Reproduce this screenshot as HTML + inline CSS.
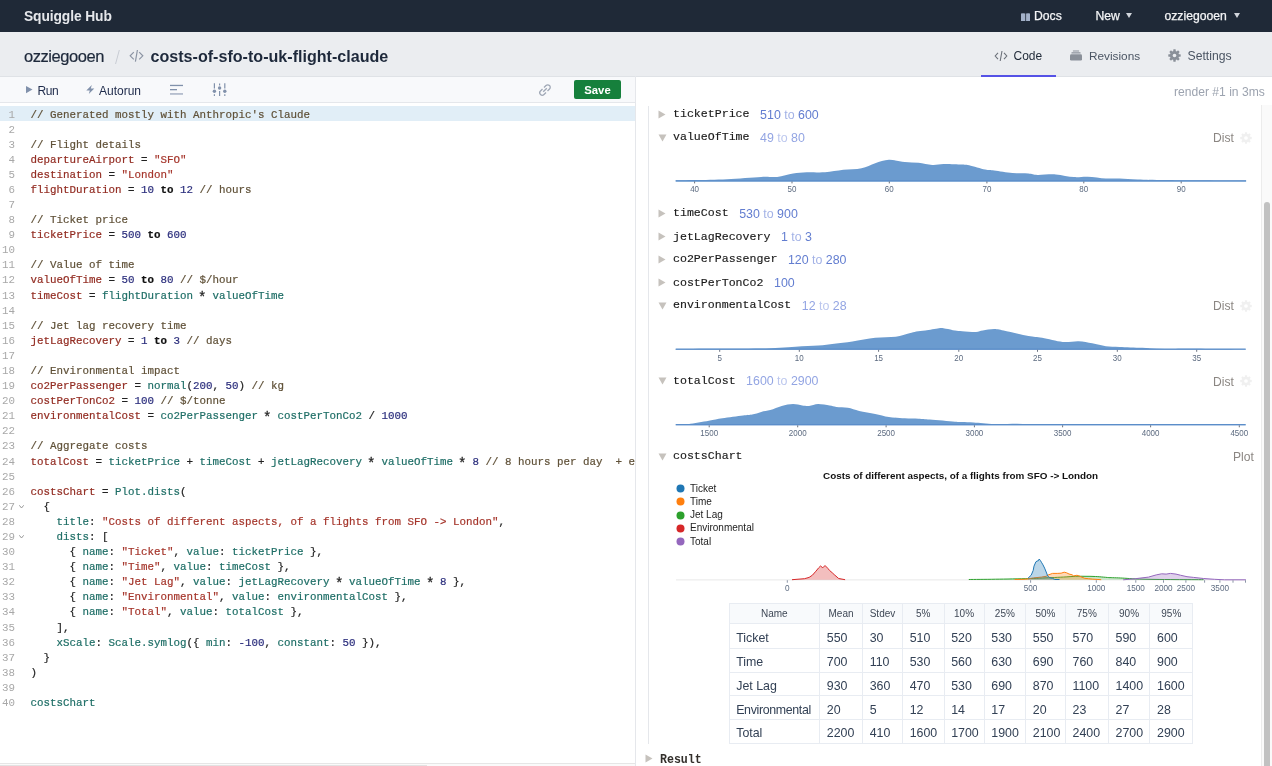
<!DOCTYPE html><html><head><meta charset="utf-8"><style>
*{box-sizing:border-box;margin:0;padding:0}
html,body{width:1272px;height:766px;overflow:hidden;background:#fff;font-family:"Liberation Sans",sans-serif}
.a{position:absolute;white-space:nowrap}
#code{position:absolute;left:0;top:0;font-family:"Liberation Mono",monospace;font-size:10.83px;line-height:15.09px}
.ln{position:absolute;left:0;width:15px;text-align:right;color:#a8a8a8}
.cl{position:absolute;left:30.5px;white-space:pre;color:#222;-webkit-text-stroke:0.2px}
.c{color:#5f5037}
.v{color:#922b21}
.n{color:#2a2d7c}
.k{font-weight:bold;color:#111}
.ast{display:inline-block;transform:translateY(2.6px) scale(1.3)}
.s{color:#a5352b}
.i{color:#1e6e66}
.vn{font-family:"Liberation Mono",monospace;font-size:11.6px;color:#1a1a1a;-webkit-text-stroke:0.15px}
.val{font-size:12.4px;color:#627dd0}
.val i{font-style:normal;color:#a3b2e6}
.vl{font-size:12.4px;color:#93a5e3}
.vl i{font-style:normal;color:#bcc7ee}
.dist{font-size:12.1px;color:#8b8682}
.tk{font-size:7.6px;color:#5d6b80;text-anchor:middle}
table{border-collapse:collapse;position:absolute;left:729px;top:603px;font-size:12.4px;color:#334155}
td,th{border:1px solid #e6eaf0;padding:0 0 0 8px;text-align:left;font-weight:normal;white-space:nowrap}
th{background:#f8fafc;font-size:10px;color:#374151;text-align:center;padding:0}
</style></head><body><div style="position:absolute;left:0;top:0;width:1272px;height:766px;overflow:hidden;will-change:transform">
<div class="a" style="left:0;top:0;width:1272px;height:32px;background:#1f2937"></div>
<div class="a" style="left:24px;top:8.5px;font-size:13.8px;letter-spacing:-0.1px;font-weight:bold;color:#e5e7eb">Squiggle Hub</div>
<svg class="a" style="left:1020.8px;top:12.7px" width="9.4" height="8.2" viewBox="0 0 9.4 8.2"><path d="M0 0.6 Q2.2 0 4.3 0.6 V8.2 Q2.2 7.6 0 8.2Z M5.1 0.6 Q7.2 0 9.4 0.6 V8.2 Q7.2 7.6 5.1 8.2Z" fill="#a3b1c9"/></svg>
<div class="a" style="left:1034px;top:8.8px;font-size:12.2px;color:#f3f4f6;-webkit-text-stroke:0.25px">Docs</div>
<div class="a" style="left:1095.5px;top:8.8px;font-size:12.2px;color:#f3f4f6;-webkit-text-stroke:0.25px">New</div>
<svg class="a" style="left:1126px;top:13px" width="6" height="5"><path d="M0 0H6L3 5Z" fill="#d1d5db"/></svg>
<div class="a" style="left:1164.5px;top:8.8px;font-size:12.2px;color:#f3f4f6;-webkit-text-stroke:0.25px">ozziegooen</div>
<svg class="a" style="left:1234px;top:13px" width="6" height="5"><path d="M0 0H6L3 5Z" fill="#d1d5db"/></svg>
<div class="a" style="left:0;top:32px;width:1272px;height:44px;background:#ebedf0"></div>
<div class="a" style="left:0;top:76px;width:1272px;height:1px;background:#dfe2e6"></div>
<div class="a" style="left:24px;top:47px;font-size:16.5px;letter-spacing:-0.45px;color:#1e293b;-webkit-text-stroke:0.2px">ozziegooen</div>
<div class="a" style="left:116.5px;top:50px;width:1.2px;height:13.5px;background:#c8ccd3;transform:skewX(-15deg)"></div>
<svg class="a" style="left:129px;top:49px" width="15" height="13" viewBox="0 0 15 13"><path d="M4.8 3.2 L1.2 6.8 L4.8 10.4 M10.2 3.2 L13.8 6.8 L10.2 10.4 M8.4 1 L6.4 12.6" fill="none" stroke="#8b94a3" stroke-width="1.2"/></svg>
<div class="a" style="left:150.5px;top:47px;font-size:16.1px;font-weight:bold;color:#1e293b">costs-of-sfo-to-uk-flight-claude</div>
<svg class="a" style="left:994px;top:49.5px" width="14" height="12" viewBox="0 0 14 12"><path d="M4 2.8 L1.2 6 L4 9.2 M10 2.8 L12.8 6 L10 9.2 M8 1 L6.2 11" fill="none" stroke="#6b7079" stroke-width="1.1"/></svg>
<div class="a" style="left:1013.5px;top:48.8px;font-size:12px;color:#1f2937">Code</div>
<div class="a" style="left:981px;top:74.5px;width:75px;height:2px;background:#5552e6"></div>
<svg class="a" style="left:1070px;top:49.5px" width="12" height="11" viewBox="0 0 12 11"><rect x="2.8" y="0.4" width="6.4" height="1" rx=".4" fill="#8a9099"/><rect x="1.4" y="2.2" width="9.2" height="1.3" rx=".5" fill="#8a9099"/><rect x="0" y="4.3" width="12" height="6.3" rx="1.3" fill="#8a9099"/></svg>
<div class="a" style="left:1089px;top:48.8px;font-size:11.8px;color:#4b5563">Revisions</div>
<svg class="a" style="left:1167.5px;top:49px" width="13" height="13" viewBox="0 0 13 13"><circle cx="6.5" cy="6.5" r="4.59" fill="#8a9099"/><rect x="5.26" y="0.30" width="2.48" height="3.10" rx="0.4" fill="#8a9099" transform="rotate(0.0 6.5 6.5)"/><rect x="5.26" y="0.30" width="2.48" height="3.10" rx="0.4" fill="#8a9099" transform="rotate(45.0 6.5 6.5)"/><rect x="5.26" y="0.30" width="2.48" height="3.10" rx="0.4" fill="#8a9099" transform="rotate(90.0 6.5 6.5)"/><rect x="5.26" y="0.30" width="2.48" height="3.10" rx="0.4" fill="#8a9099" transform="rotate(135.0 6.5 6.5)"/><rect x="5.26" y="0.30" width="2.48" height="3.10" rx="0.4" fill="#8a9099" transform="rotate(180.0 6.5 6.5)"/><rect x="5.26" y="0.30" width="2.48" height="3.10" rx="0.4" fill="#8a9099" transform="rotate(225.0 6.5 6.5)"/><rect x="5.26" y="0.30" width="2.48" height="3.10" rx="0.4" fill="#8a9099" transform="rotate(270.0 6.5 6.5)"/><rect x="5.26" y="0.30" width="2.48" height="3.10" rx="0.4" fill="#8a9099" transform="rotate(315.0 6.5 6.5)"/><circle cx="6.5" cy="6.5" r="1.8" fill="#ebedf0"/></svg>
<div class="a" style="left:1187.5px;top:48.6px;font-size:12.2px;color:#4b5563">Settings</div>
<div class="a" style="left:0;top:77px;width:636px;height:26px;background:#f8f9fb;border-bottom:1px solid #e5e7eb"></div>
<div class="a" style="left:635px;top:76px;width:1px;height:690px;background:#e5e7eb"></div>
<svg class="a" style="left:26px;top:86px" width="7" height="8"><path d="M0 0L6.5 3.6L0 7.2Z" fill="#8191ab"/></svg>
<div class="a" style="left:37.5px;top:84px;font-size:12px;letter-spacing:-0.4px;color:#1e2a4a">Run</div>
<svg class="a" style="left:86px;top:85px" width="9" height="10" viewBox="0 0 9 10"><path d="M5.8 0 L0.3 5.4 H3.8 L2.8 9 L8.3 3.6 H4.8 Z" fill="#8191ab"/></svg>
<div class="a" style="left:99px;top:84px;font-size:12px;color:#1e2a4a">Autorun</div>
<svg class="a" style="left:170px;top:84px" width="14" height="11"><rect x="0" y="0.8" width="13" height="1.3" fill="#8191ab"/><rect x="0" y="5" width="7" height="1.3" fill="#8191ab"/><rect x="0" y="9.3" width="13" height="1.3" fill="#9aa6bb"/></svg>
<svg class="a" style="left:212px;top:82px" width="15" height="15" viewBox="0 0 15 15"><g stroke="#8191ab" stroke-width="1.2"><path d="M2.4 1.3V6.4M2.4 12.2V14M7.6 1.5V3.5M7.6 9V14M12.8 1.3V6.4M12.8 12.2V14"/></g><g fill="#8191ab"><circle cx="2.4" cy="9.3" r="1.7"/><circle cx="7.6" cy="6" r="1.7"/><circle cx="12.8" cy="9.3" r="1.7"/></g></svg>
<svg class="a" style="left:538px;top:83px" width="14" height="14" viewBox="0 0 14 14"><g fill="none" stroke="#a0a8b6" stroke-width="1.3"><path d="M6 4.5 L8 2.5 A2.3 2.3 0 0 1 11.5 6 L9.5 8"/><path d="M8 9.5 L6 11.5 A2.3 2.3 0 0 1 2.5 8 L4.5 6"/><path d="M5.2 8.8 L8.8 5.2"/></g></svg>
<div class="a" style="left:574px;top:80px;width:47px;height:19px;background:#16803c;border-radius:2px;color:#fff;font-weight:bold;font-size:11.3px;text-align:center;line-height:20px">Save</div>
<div class="a" style="left:0;top:106px;width:635px;height:15px;background:#e1eef7"></div>
<div class="a" style="left:0;top:763px;width:635px;height:3px;background:#fafafa;border-top:1px solid #e6e6e6"></div><div class="a" style="left:0;top:765px;width:427px;height:1px;background:#e2e2e2"></div>
<div class="a" style="left:0;top:106.5px;width:635px;height:655px;overflow:hidden"><div id="code" style="top:1px"><div class="ln" style="top:0.00px">1</div><div class="cl" style="top:0.00px"><span class="c">// Generated mostly with Anthropic&#x27;s Claude</span></div>
<div class="ln" style="top:15.09px">2</div><div class="cl" style="top:15.09px"></div>
<div class="ln" style="top:30.18px">3</div><div class="cl" style="top:30.18px"><span class="c">// Flight details</span></div>
<div class="ln" style="top:45.27px">4</div><div class="cl" style="top:45.27px"><span class="v">departureAirport</span> = <span class="s">&quot;SFO&quot;</span></div>
<div class="ln" style="top:60.36px">5</div><div class="cl" style="top:60.36px"><span class="v">destination</span> = <span class="s">&quot;London&quot;</span></div>
<div class="ln" style="top:75.45px">6</div><div class="cl" style="top:75.45px"><span class="v">flightDuration</span> = <span class="n">10</span> <span class="k">to</span> <span class="n">12</span> <span class="c">// hours</span></div>
<div class="ln" style="top:90.54px">7</div><div class="cl" style="top:90.54px"></div>
<div class="ln" style="top:105.63px">8</div><div class="cl" style="top:105.63px"><span class="c">// Ticket price</span></div>
<div class="ln" style="top:120.72px">9</div><div class="cl" style="top:120.72px"><span class="v">ticketPrice</span> = <span class="n">500</span> <span class="k">to</span> <span class="n">600</span></div>
<div class="ln" style="top:135.81px">10</div><div class="cl" style="top:135.81px"></div>
<div class="ln" style="top:150.90px">11</div><div class="cl" style="top:150.90px"><span class="c">// Value of time</span></div>
<div class="ln" style="top:165.99px">12</div><div class="cl" style="top:165.99px"><span class="v">valueOfTime</span> = <span class="n">50</span> <span class="k">to</span> <span class="n">80</span> <span class="c">// $/hour</span></div>
<div class="ln" style="top:181.08px">13</div><div class="cl" style="top:181.08px"><span class="v">timeCost</span> = <span class="i">flightDuration</span> <span class="ast">*</span> <span class="i">valueOfTime</span></div>
<div class="ln" style="top:196.17px">14</div><div class="cl" style="top:196.17px"></div>
<div class="ln" style="top:211.26px">15</div><div class="cl" style="top:211.26px"><span class="c">// Jet lag recovery time</span></div>
<div class="ln" style="top:226.35px">16</div><div class="cl" style="top:226.35px"><span class="v">jetLagRecovery</span> = <span class="n">1</span> <span class="k">to</span> <span class="n">3</span> <span class="c">// days</span></div>
<div class="ln" style="top:241.44px">17</div><div class="cl" style="top:241.44px"></div>
<div class="ln" style="top:256.53px">18</div><div class="cl" style="top:256.53px"><span class="c">// Environmental impact</span></div>
<div class="ln" style="top:271.62px">19</div><div class="cl" style="top:271.62px"><span class="v">co2PerPassenger</span> = <span class="i">normal</span>(<span class="n">200</span>, <span class="n">50</span>) <span class="c">// kg</span></div>
<div class="ln" style="top:286.71px">20</div><div class="cl" style="top:286.71px"><span class="v">costPerTonCo2</span> = <span class="n">100</span> <span class="c">// $/tonne</span></div>
<div class="ln" style="top:301.80px">21</div><div class="cl" style="top:301.80px"><span class="v">environmentalCost</span> = <span class="i">co2PerPassenger</span> <span class="ast">*</span> <span class="i">costPerTonCo2</span> / <span class="n">1000</span></div>
<div class="ln" style="top:316.89px">22</div><div class="cl" style="top:316.89px"></div>
<div class="ln" style="top:331.98px">23</div><div class="cl" style="top:331.98px"><span class="c">// Aggregate costs</span></div>
<div class="ln" style="top:347.07px">24</div><div class="cl" style="top:347.07px"><span class="v">totalCost</span> = <span class="i">ticketPrice</span> + <span class="i">timeCost</span> + <span class="i">jetLagRecovery</span> <span class="ast">*</span> <span class="i">valueOfTime</span> <span class="ast">*</span> <span class="n">8</span> <span class="c">// 8 hours per day  + e</span></div>
<div class="ln" style="top:362.16px">25</div><div class="cl" style="top:362.16px"></div>
<div class="ln" style="top:377.25px">26</div><div class="cl" style="top:377.25px"><span class="v">costsChart</span> = <span class="i">Plot.dists</span>(</div>
<div class="ln" style="top:392.34px">27</div><div class="cl" style="top:392.34px">  {</div>
<div class="ln" style="top:407.43px">28</div><div class="cl" style="top:407.43px">    <span class="i">title</span>: <span class="s">&quot;Costs of different aspects, of a flights from SFO -&gt; London&quot;</span>,</div>
<div class="ln" style="top:422.52px">29</div><div class="cl" style="top:422.52px">    <span class="i">dists</span>: [</div>
<div class="ln" style="top:437.61px">30</div><div class="cl" style="top:437.61px">      { <span class="i">name</span>: <span class="s">&quot;Ticket&quot;</span>, <span class="i">value</span>: <span class="i">ticketPrice</span> },</div>
<div class="ln" style="top:452.70px">31</div><div class="cl" style="top:452.70px">      { <span class="i">name</span>: <span class="s">&quot;Time&quot;</span>, <span class="i">value</span>: <span class="i">timeCost</span> },</div>
<div class="ln" style="top:467.79px">32</div><div class="cl" style="top:467.79px">      { <span class="i">name</span>: <span class="s">&quot;Jet Lag&quot;</span>, <span class="i">value</span>: <span class="i">jetLagRecovery</span> <span class="ast">*</span> <span class="i">valueOfTime</span> <span class="ast">*</span> <span class="n">8</span> },</div>
<div class="ln" style="top:482.88px">33</div><div class="cl" style="top:482.88px">      { <span class="i">name</span>: <span class="s">&quot;Environmental&quot;</span>, <span class="i">value</span>: <span class="i">environmentalCost</span> },</div>
<div class="ln" style="top:497.97px">34</div><div class="cl" style="top:497.97px">      { <span class="i">name</span>: <span class="s">&quot;Total&quot;</span>, <span class="i">value</span>: <span class="i">totalCost</span> },</div>
<div class="ln" style="top:513.06px">35</div><div class="cl" style="top:513.06px">    ],</div>
<div class="ln" style="top:528.15px">36</div><div class="cl" style="top:528.15px">    <span class="i">xScale</span>: <span class="i">Scale.symlog</span>({ <span class="i">min</span>: <span class="n">-100</span>, <span class="i">constant</span>: <span class="n">50</span> }),</div>
<div class="ln" style="top:543.24px">37</div><div class="cl" style="top:543.24px">  }</div>
<div class="ln" style="top:558.33px">38</div><div class="cl" style="top:558.33px">)</div>
<div class="ln" style="top:573.42px">39</div><div class="cl" style="top:573.42px"></div>
<div class="ln" style="top:588.51px">40</div><div class="cl" style="top:588.51px"><span class="i">costsChart</span></div>
</div></div>
<svg class="a" style="left:19px;top:504.8px" width="5" height="4"><path d="M0.3 0.3L2.5 3L4.7 0.3" fill="none" stroke="#8c8c8c" stroke-width="0.9"/></svg>
<svg class="a" style="left:19px;top:535.0px" width="5" height="4"><path d="M0.3 0.3L2.5 3L4.7 0.3" fill="none" stroke="#8c8c8c" stroke-width="0.9"/></svg>
<div class="a" style="left:1174px;top:84.8px;font-size:12.1px;color:#9ca3af">render #1 in 3ms</div>
<div class="a" style="left:1261px;top:105px;width:11px;height:661px;background:#fafafa;border-left:1px solid #ececec"></div>
<div class="a" style="left:1264px;top:202px;width:6px;height:570px;background:#c1c1c1;border-radius:3px"></div>
<div class="a" style="left:648px;top:106px;width:1px;height:638px;background:#e5e7eb"></div>
<svg class="a" style="left:658px;top:110.0px" width="8" height="9"><path d="M0.5 0.5L7.5 4.5L0.5 8.5Z" fill="#c6c2bd"/></svg>
<div class="a vn" style="left:673px;top:107.1px;line-height:13px">ticketPrice</div>
<div class="a val" style="left:760.1px;top:107.5px;line-height:14px">510 <i>to</i> 600</div>
<svg class="a" style="left:658px;top:133.5px" width="9" height="8"><path d="M0.5 0.5H8.5L4.5 7.5Z" fill="#c6c2bd"/></svg>
<div class="a vn" style="left:673px;top:130.1px;line-height:13px">valueOfTime</div>
<div class="a vl" style="left:760.1px;top:130.5px;line-height:14px">49 <i>to</i> 80</div>
<div class="a dist" style="left:1213px;top:131.0px;line-height:14px">Dist</div>
<svg class="a" style="left:1240px;top:131.5px" width="12" height="12" viewBox="0 0 13 13"><circle cx="6.5" cy="6.5" r="4.59" fill="#f0f0f0"/><rect x="5.26" y="0.30" width="2.48" height="3.10" rx="0.4" fill="#f0f0f0" transform="rotate(0.0 6.5 6.5)"/><rect x="5.26" y="0.30" width="2.48" height="3.10" rx="0.4" fill="#f0f0f0" transform="rotate(45.0 6.5 6.5)"/><rect x="5.26" y="0.30" width="2.48" height="3.10" rx="0.4" fill="#f0f0f0" transform="rotate(90.0 6.5 6.5)"/><rect x="5.26" y="0.30" width="2.48" height="3.10" rx="0.4" fill="#f0f0f0" transform="rotate(135.0 6.5 6.5)"/><rect x="5.26" y="0.30" width="2.48" height="3.10" rx="0.4" fill="#f0f0f0" transform="rotate(180.0 6.5 6.5)"/><rect x="5.26" y="0.30" width="2.48" height="3.10" rx="0.4" fill="#f0f0f0" transform="rotate(225.0 6.5 6.5)"/><rect x="5.26" y="0.30" width="2.48" height="3.10" rx="0.4" fill="#f0f0f0" transform="rotate(270.0 6.5 6.5)"/><rect x="5.26" y="0.30" width="2.48" height="3.10" rx="0.4" fill="#f0f0f0" transform="rotate(315.0 6.5 6.5)"/><circle cx="6.5" cy="6.5" r="2" fill="#fff"/></svg>
<svg class="a" style="left:658px;top:209.0px" width="8" height="9"><path d="M0.5 0.5L7.5 4.5L0.5 8.5Z" fill="#c6c2bd"/></svg>
<div class="a vn" style="left:673px;top:206.1px;line-height:13px">timeCost</div>
<div class="a val" style="left:739.2px;top:206.5px;line-height:14px">530 <i>to</i> 900</div>
<svg class="a" style="left:658px;top:232.4px" width="8" height="9"><path d="M0.5 0.5L7.5 4.5L0.5 8.5Z" fill="#c6c2bd"/></svg>
<div class="a vn" style="left:673px;top:229.5px;line-height:13px">jetLagRecovery</div>
<div class="a val" style="left:780.9px;top:229.9px;line-height:14px">1 <i>to</i> 3</div>
<svg class="a" style="left:658px;top:255.0px" width="8" height="9"><path d="M0.5 0.5L7.5 4.5L0.5 8.5Z" fill="#c6c2bd"/></svg>
<div class="a vn" style="left:673px;top:252.1px;line-height:13px">co2PerPassenger</div>
<div class="a val" style="left:787.9px;top:252.5px;line-height:14px">120 <i>to</i> 280</div>
<svg class="a" style="left:658px;top:278.4px" width="8" height="9"><path d="M0.5 0.5L7.5 4.5L0.5 8.5Z" fill="#c6c2bd"/></svg>
<div class="a vn" style="left:673px;top:275.5px;line-height:13px">costPerTonCo2</div>
<div class="a val" style="left:774.0px;top:275.9px;line-height:14px">100</div>
<svg class="a" style="left:658px;top:301.8px" width="9" height="8"><path d="M0.5 0.5H8.5L4.5 7.5Z" fill="#c6c2bd"/></svg>
<div class="a vn" style="left:673px;top:298.4px;line-height:13px">environmentalCost</div>
<div class="a vl" style="left:801.8px;top:298.8px;line-height:14px">12 <i>to</i> 28</div>
<div class="a dist" style="left:1213px;top:299.3px;line-height:14px">Dist</div>
<svg class="a" style="left:1240px;top:299.8px" width="12" height="12" viewBox="0 0 13 13"><circle cx="6.5" cy="6.5" r="4.59" fill="#f0f0f0"/><rect x="5.26" y="0.30" width="2.48" height="3.10" rx="0.4" fill="#f0f0f0" transform="rotate(0.0 6.5 6.5)"/><rect x="5.26" y="0.30" width="2.48" height="3.10" rx="0.4" fill="#f0f0f0" transform="rotate(45.0 6.5 6.5)"/><rect x="5.26" y="0.30" width="2.48" height="3.10" rx="0.4" fill="#f0f0f0" transform="rotate(90.0 6.5 6.5)"/><rect x="5.26" y="0.30" width="2.48" height="3.10" rx="0.4" fill="#f0f0f0" transform="rotate(135.0 6.5 6.5)"/><rect x="5.26" y="0.30" width="2.48" height="3.10" rx="0.4" fill="#f0f0f0" transform="rotate(180.0 6.5 6.5)"/><rect x="5.26" y="0.30" width="2.48" height="3.10" rx="0.4" fill="#f0f0f0" transform="rotate(225.0 6.5 6.5)"/><rect x="5.26" y="0.30" width="2.48" height="3.10" rx="0.4" fill="#f0f0f0" transform="rotate(270.0 6.5 6.5)"/><rect x="5.26" y="0.30" width="2.48" height="3.10" rx="0.4" fill="#f0f0f0" transform="rotate(315.0 6.5 6.5)"/><circle cx="6.5" cy="6.5" r="2" fill="#fff"/></svg>
<svg class="a" style="left:658px;top:377.3px" width="9" height="8"><path d="M0.5 0.5H8.5L4.5 7.5Z" fill="#c6c2bd"/></svg>
<div class="a vn" style="left:673px;top:373.9px;line-height:13px">totalCost</div>
<div class="a vl" style="left:746.1px;top:374.3px;line-height:14px">1600 <i>to</i> 2900</div>
<div class="a dist" style="left:1213px;top:374.8px;line-height:14px">Dist</div>
<svg class="a" style="left:1240px;top:375.3px" width="12" height="12" viewBox="0 0 13 13"><circle cx="6.5" cy="6.5" r="4.59" fill="#f0f0f0"/><rect x="5.26" y="0.30" width="2.48" height="3.10" rx="0.4" fill="#f0f0f0" transform="rotate(0.0 6.5 6.5)"/><rect x="5.26" y="0.30" width="2.48" height="3.10" rx="0.4" fill="#f0f0f0" transform="rotate(45.0 6.5 6.5)"/><rect x="5.26" y="0.30" width="2.48" height="3.10" rx="0.4" fill="#f0f0f0" transform="rotate(90.0 6.5 6.5)"/><rect x="5.26" y="0.30" width="2.48" height="3.10" rx="0.4" fill="#f0f0f0" transform="rotate(135.0 6.5 6.5)"/><rect x="5.26" y="0.30" width="2.48" height="3.10" rx="0.4" fill="#f0f0f0" transform="rotate(180.0 6.5 6.5)"/><rect x="5.26" y="0.30" width="2.48" height="3.10" rx="0.4" fill="#f0f0f0" transform="rotate(225.0 6.5 6.5)"/><rect x="5.26" y="0.30" width="2.48" height="3.10" rx="0.4" fill="#f0f0f0" transform="rotate(270.0 6.5 6.5)"/><rect x="5.26" y="0.30" width="2.48" height="3.10" rx="0.4" fill="#f0f0f0" transform="rotate(315.0 6.5 6.5)"/><circle cx="6.5" cy="6.5" r="2" fill="#fff"/></svg>
<svg class="a" style="left:658px;top:452.5px" width="9" height="8"><path d="M0.5 0.5H8.5L4.5 7.5Z" fill="#c6c2bd"/></svg>
<div class="a vn" style="left:673px;top:449.1px;line-height:13px">costsChart</div>
<div class="a dist" style="left:1233px;top:450.0px;line-height:14px">Plot</div>
<svg class="a" style="left:0;top:0" width="1272" height="766"><path d="M675.7 180.3 C678.8 180.3 686.9 180.3 695.1 180.1 C703.3 179.9 716.4 179.7 727.0 179.2 C737.6 178.7 753.2 177.3 761.2 176.9 C769.2 176.5 772.1 177.5 777.2 176.9 C782.3 176.4 788.4 174.2 793.1 173.5 C797.9 172.8 801.7 172.5 806.8 172.3 C811.9 172.2 819.2 172.7 825.0 172.3 C830.9 171.9 837.4 170.5 843.3 169.8 C849.1 169.2 856.4 169.3 861.5 168.2 C866.6 167.2 870.8 164.6 875.2 163.2 C879.6 161.9 884.1 160.0 888.9 159.8 C893.6 159.6 900.1 161.4 904.8 161.9 C909.6 162.3 914.1 162.3 918.5 162.8 C922.9 163.3 928.2 164.8 932.2 165.0 C936.2 165.3 939.1 164.2 943.6 164.1 C948.0 164.1 955.9 164.4 960.0 164.6 C964.1 164.8 965.1 164.5 969.1 165.3 C973.1 166.1 981.1 168.8 985.1 169.6 C989.1 170.4 989.8 170.0 994.2 170.5 C998.6 171.1 1007.0 172.6 1012.4 173.0 C1017.9 173.5 1024.4 173.2 1028.4 173.5 C1032.4 173.8 1033.1 174.7 1037.5 174.9 C1041.9 175.0 1049.9 174.0 1055.8 174.4 C1061.6 174.8 1068.9 176.8 1074.0 177.1 C1079.1 177.5 1082.6 176.5 1087.7 176.7 C1092.8 176.9 1100.8 178.2 1105.9 178.5 C1111.0 178.8 1114.5 178.3 1119.6 178.5 C1124.7 178.7 1130.5 179.4 1137.8 179.6 C1145.1 179.9 1157.2 180.0 1165.2 180.1 C1173.2 180.2 1175.0 180.3 1188.0 180.3 C1200.9 180.4 1236.8 180.5 1246.1 180.6 L1246.1 181.4 L675.7 181.4 Z" fill="#6b9bcf"/><path d="M675.7 180.8H1246.1" stroke="#5b8dc9" stroke-width="1.2"/><rect x="694.1" y="181.4" width="1" height="2" fill="#6b7280"/><text transform="translate(694.6 192.4) scale(1 1.2)" font-family="Liberation Sans" font-size="8" fill="#5d6b80" text-anchor="middle">40</text><rect x="791.5" y="181.4" width="1" height="2" fill="#6b7280"/><text transform="translate(792.0 192.4) scale(1 1.2)" font-family="Liberation Sans" font-size="8" fill="#5d6b80" text-anchor="middle">50</text><rect x="888.8" y="181.4" width="1" height="2" fill="#6b7280"/><text transform="translate(889.3 192.4) scale(1 1.2)" font-family="Liberation Sans" font-size="8" fill="#5d6b80" text-anchor="middle">60</text><rect x="986.4" y="181.4" width="1" height="2" fill="#6b7280"/><text transform="translate(986.9 192.4) scale(1 1.2)" font-family="Liberation Sans" font-size="8" fill="#5d6b80" text-anchor="middle">70</text><rect x="1083.3" y="181.4" width="1" height="2" fill="#6b7280"/><text transform="translate(1083.8 192.4) scale(1 1.2)" font-family="Liberation Sans" font-size="8" fill="#5d6b80" text-anchor="middle">80</text><rect x="1180.7" y="181.4" width="1" height="2" fill="#6b7280"/><text transform="translate(1181.2 192.4) scale(1 1.2)" font-family="Liberation Sans" font-size="8" fill="#5d6b80" text-anchor="middle">90</text></svg>
<svg class="a" style="left:0;top:0" width="1272" height="766"><path d="M675.7 349.0 C682.1 348.9 701.9 348.8 715.6 348.7 C729.3 348.7 748.4 348.8 761.2 348.5 C774.0 348.2 786.3 347.2 795.4 346.7 C804.5 346.2 812.0 346.0 818.2 345.6 C824.4 345.1 828.7 344.4 834.2 343.7 C839.6 343.1 845.8 342.4 852.4 341.4 C859.0 340.5 868.3 338.6 875.2 337.8 C882.1 337.0 890.2 337.4 895.7 336.7 C901.2 335.9 906.1 334.1 909.4 333.2 C912.7 332.4 913.7 331.9 916.2 331.4 C918.8 331.0 921.7 331.0 925.4 330.5 C929.0 330.0 935.8 328.5 939.0 328.2 C942.3 327.9 943.3 328.3 945.9 328.7 C948.4 329.0 952.4 330.1 955.0 330.5 C957.6 330.9 958.9 331.0 962.3 331.2 C965.6 331.4 972.7 332.0 976.0 331.9 C979.2 331.8 979.9 330.9 982.8 330.5 C985.7 330.1 990.6 329.1 994.2 329.1 C997.8 329.2 1000.1 329.9 1005.6 331.0 C1011.1 332.1 1022.6 334.9 1028.4 336.0 C1034.2 337.1 1036.6 336.9 1042.1 337.8 C1047.6 338.7 1056.8 341.4 1062.6 341.9 C1068.4 342.5 1073.8 341.0 1078.6 341.2 C1083.3 341.4 1087.9 342.5 1092.2 343.3 C1096.6 344.1 1101.5 345.7 1105.9 346.2 C1110.3 346.8 1113.8 346.7 1119.6 346.9 C1125.4 347.2 1135.1 347.5 1142.4 347.8 C1149.7 348.2 1157.9 348.8 1165.2 349.0 C1172.5 349.1 1175.1 348.7 1188.0 348.7 C1200.9 348.8 1236.5 349.1 1245.7 349.2 L1245.7 349.8 L675.7 349.8 Z" fill="#6b9bcf"/><path d="M675.7 349.2H1245.7" stroke="#5b8dc9" stroke-width="1.2"/><rect x="719.2" y="349.8" width="1" height="2" fill="#6b7280"/><text transform="translate(719.7 360.8) scale(1 1.2)" font-family="Liberation Sans" font-size="8" fill="#5d6b80" text-anchor="middle">5</text><rect x="798.8" y="349.8" width="1" height="2" fill="#6b7280"/><text transform="translate(799.3 360.8) scale(1 1.2)" font-family="Liberation Sans" font-size="8" fill="#5d6b80" text-anchor="middle">10</text><rect x="878.1" y="349.8" width="1" height="2" fill="#6b7280"/><text transform="translate(878.6 360.8) scale(1 1.2)" font-family="Liberation Sans" font-size="8" fill="#5d6b80" text-anchor="middle">15</text><rect x="958.3" y="349.8" width="1" height="2" fill="#6b7280"/><text transform="translate(958.8 360.8) scale(1 1.2)" font-family="Liberation Sans" font-size="8" fill="#5d6b80" text-anchor="middle">20</text><rect x="1037.0" y="349.8" width="1" height="2" fill="#6b7280"/><text transform="translate(1037.5 360.8) scale(1 1.2)" font-family="Liberation Sans" font-size="8" fill="#5d6b80" text-anchor="middle">25</text><rect x="1116.8" y="349.8" width="1" height="2" fill="#6b7280"/><text transform="translate(1117.3 360.8) scale(1 1.2)" font-family="Liberation Sans" font-size="8" fill="#5d6b80" text-anchor="middle">30</text><rect x="1196.2" y="349.8" width="1" height="2" fill="#6b7280"/><text transform="translate(1196.7 360.8) scale(1 1.2)" font-family="Liberation Sans" font-size="8" fill="#5d6b80" text-anchor="middle">35</text></svg>
<svg class="a" style="left:0;top:0" width="1272" height="766"><path d="M675.7 424.7 C677.7 424.6 683.0 424.8 688.2 424.2 C693.5 423.6 703.3 421.7 708.8 420.8 C714.2 419.8 717.0 419.1 722.4 418.3 C727.9 417.4 738.2 416.1 743.0 415.5 C747.7 415.0 749.2 415.2 752.1 414.6 C755.0 414.0 758.3 412.6 761.2 411.9 C764.1 411.2 767.0 411.0 770.3 410.1 C773.6 409.1 778.1 406.9 781.7 406.0 C785.4 405.0 789.8 404.2 793.1 404.1 C796.4 404.1 799.7 405.2 802.2 405.5 C804.8 405.8 806.5 406.2 809.1 406.0 C811.6 405.7 814.9 404.2 818.2 404.1 C821.5 404.1 826.7 405.1 829.6 405.5 C832.5 405.9 833.5 406.5 836.4 406.9 C839.4 407.2 844.2 407.1 847.8 407.8 C851.5 408.4 854.9 410.0 859.2 411.0 C863.6 412.0 870.5 413.0 875.2 413.9 C879.9 414.9 884.1 416.2 888.9 416.9 C893.6 417.6 900.1 418.0 904.8 418.3 C909.6 418.6 914.5 418.5 918.5 418.7 C922.5 418.9 924.1 419.2 929.9 419.6 C935.8 420.1 949.8 421.3 955.0 421.7 C960.2 422.1 959.3 421.8 962.3 421.9 C965.3 422.0 968.6 422.0 973.7 422.4 C978.8 422.7 987.3 423.8 994.2 424.0 C1001.1 424.2 1009.7 423.7 1017.0 423.7 C1024.3 423.8 1033.6 424.4 1039.8 424.4 C1046.0 424.5 1046.6 423.9 1055.8 424.0 C1064.9 424.0 1066.4 424.5 1096.8 424.7 C1127.2 424.8 1221.9 424.7 1245.7 424.7 L1245.7 425.3 L675.7 425.3 Z" fill="#6b9bcf"/><path d="M675.7 424.7H1245.7" stroke="#5b8dc9" stroke-width="1.2"/><rect x="708.7" y="425.3" width="1" height="2" fill="#6b7280"/><text transform="translate(709.2 436.3) scale(1 1.2)" font-family="Liberation Sans" font-size="8" fill="#5d6b80" text-anchor="middle">1500</text><rect x="797.2" y="425.3" width="1" height="2" fill="#6b7280"/><text transform="translate(797.7 436.3) scale(1 1.2)" font-family="Liberation Sans" font-size="8" fill="#5d6b80" text-anchor="middle">2000</text><rect x="885.6" y="425.3" width="1" height="2" fill="#6b7280"/><text transform="translate(886.1 436.3) scale(1 1.2)" font-family="Liberation Sans" font-size="8" fill="#5d6b80" text-anchor="middle">2500</text><rect x="973.9" y="425.3" width="1" height="2" fill="#6b7280"/><text transform="translate(974.4 436.3) scale(1 1.2)" font-family="Liberation Sans" font-size="8" fill="#5d6b80" text-anchor="middle">3000</text><rect x="1062.1" y="425.3" width="1" height="2" fill="#6b7280"/><text transform="translate(1062.6 436.3) scale(1 1.2)" font-family="Liberation Sans" font-size="8" fill="#5d6b80" text-anchor="middle">3500</text><rect x="1150.1" y="425.3" width="1" height="2" fill="#6b7280"/><text transform="translate(1150.6 436.3) scale(1 1.2)" font-family="Liberation Sans" font-size="8" fill="#5d6b80" text-anchor="middle">4000</text><rect x="1238.8" y="425.3" width="1" height="2" fill="#6b7280"/><text transform="translate(1239.3 436.3) scale(1 1.2)" font-family="Liberation Sans" font-size="8" fill="#5d6b80" text-anchor="middle">4500</text></svg>
<div class="a" style="left:823px;top:469.5px;font-size:9.9px;font-weight:bold;color:#111">Costs of different aspects, of a flights from SFO -&gt; London</div>
<svg class="a" style="left:676px;top:484.1px" width="9" height="9"><circle cx="4.5" cy="4.5" r="4" fill="#1f77b4"/></svg>
<div class="a" style="left:690px;top:482.8px;font-size:10px;line-height:12px;color:#222">Ticket</div>
<svg class="a" style="left:676px;top:497.3px" width="9" height="9"><circle cx="4.5" cy="4.5" r="4" fill="#ff7f0e"/></svg>
<div class="a" style="left:690px;top:496.0px;font-size:10px;line-height:12px;color:#222">Time</div>
<svg class="a" style="left:676px;top:510.5px" width="9" height="9"><circle cx="4.5" cy="4.5" r="4" fill="#2ca02c"/></svg>
<div class="a" style="left:690px;top:509.2px;font-size:10px;line-height:12px;color:#222">Jet Lag</div>
<svg class="a" style="left:676px;top:523.7px" width="9" height="9"><circle cx="4.5" cy="4.5" r="4" fill="#d62728"/></svg>
<div class="a" style="left:690px;top:522.4px;font-size:10px;line-height:12px;color:#222">Environmental</div>
<svg class="a" style="left:676px;top:536.9px" width="9" height="9"><circle cx="4.5" cy="4.5" r="4" fill="#9467bd"/></svg>
<div class="a" style="left:690px;top:535.6px;font-size:10px;line-height:12px;color:#222">Total</div>
<svg class="a" style="left:0;top:0" width="1272" height="766"><path d="M676 579.9H1246" stroke="#e8e8e8" stroke-width="1"/><path d="M968.8 579.5 C973.1 579.4 985.8 579.4 995.4 579.2 C1004.9 579.1 1020.8 578.8 1028.4 578.6 C1035.9 578.4 1038.4 578.2 1042.5 578.0 C1046.7 577.9 1050.6 577.6 1054.3 577.5 C1058.1 577.3 1062.7 577.1 1066.1 576.9 C1069.5 576.7 1072.5 576.4 1075.6 576.3 C1078.6 576.2 1081.8 576.2 1085.0 576.3 C1088.2 576.3 1091.6 576.3 1095.6 576.5 C1099.6 576.7 1107.7 577.5 1110.0 577.7 L1110.0 579.7 L968.8 579.7Z" fill="#2ca02c" fill-opacity="0.25" stroke="none"/><path d="M968.8 579.5 C973.1 579.4 985.8 579.4 995.4 579.2 C1004.9 579.1 1020.8 578.8 1028.4 578.6 C1035.9 578.4 1038.4 578.2 1042.5 578.0 C1046.7 577.9 1050.6 577.6 1054.3 577.5 C1058.1 577.3 1062.7 577.1 1066.1 576.9 C1069.5 576.7 1072.5 576.4 1075.6 576.3 C1078.6 576.2 1081.8 576.2 1085.0 576.3 C1088.2 576.3 1091.6 576.3 1095.6 576.5 C1099.6 576.7 1107.7 577.5 1110.0 577.7" fill="none" stroke="#2ca02c" stroke-width="1" stroke-linejoin="round"/><path d="M1110.0 577.6 C1112.3 577.7 1120.3 577.9 1124.3 578.2 C1128.4 578.4 1130.6 578.7 1135.3 578.9 C1140.1 579.1 1147.5 579.3 1154.0 579.4 C1160.5 579.5 1168.1 579.5 1176.0 579.6 C1184.0 579.6 1199.1 579.7 1203.6 579.7 L1203.6 579.7 L1110.0 579.7Z" fill="#2ca02c" fill-opacity="0.25" stroke="none"/><path d="M1110.0 577.6 C1112.3 577.7 1120.3 577.9 1124.3 578.2 C1128.4 578.4 1130.6 578.7 1135.3 578.9 C1140.1 579.1 1147.5 579.3 1154.0 579.4 C1160.5 579.5 1168.1 579.5 1176.0 579.6 C1184.0 579.6 1199.1 579.7 1203.6 579.7" fill="none" stroke="#2ca02c" stroke-width="1" stroke-linejoin="round"/><path d="M1014.7 579.5 L1025.7 579.2 L1033.6 577.9 L1041.4 577.1 L1046.2 576.3 L1047.7 575.2 L1052.5 573.4 L1057.2 573.4 L1061.1 573.2 L1064.2 572.2 L1066.6 572.8 L1069.0 574.0 L1072.1 574.8 L1073.7 575.9 L1076.8 575.3 L1078.4 575.6 L1080.8 576.7 L1084.7 578.3 L1088.6 578.7 L1092.5 579.1 L1101.2 579.7 L1101.2 579.7 L1014.7 579.7Z" fill="#ff7f0e" fill-opacity="0.3" stroke="none"/><path d="M1014.7 579.5 L1025.7 579.2 L1033.6 577.9 L1041.4 577.1 L1046.2 576.3 L1047.7 575.2 L1052.5 573.4 L1057.2 573.4 L1061.1 573.2 L1064.2 572.2 L1066.6 572.8 L1069.0 574.0 L1072.1 574.8 L1073.7 575.9 L1076.8 575.3 L1078.4 575.6 L1080.8 576.7 L1084.7 578.3 L1088.6 578.7 L1092.5 579.1 L1101.2 579.7" fill="none" stroke="#ff7f0e" stroke-width="1" stroke-linejoin="round"/><path d="M1028.1 578.1 L1031.2 575.2 L1033.2 570.4 L1034.0 566.1 L1035.9 561.8 L1037.1 561.0 L1038.3 560.8 L1039.2 559.0 L1040.3 560.4 L1041.4 562.2 L1043.0 564.9 L1044.6 568.1 L1046.2 572.0 L1047.7 575.9 L1049.3 577.5 L1052.5 578.3 L1054.8 579.5 L1059.5 579.5 L1059.5 579.7 L1028.1 579.7Z" fill="#1f77b4" fill-opacity="0.3" stroke="none"/><path d="M1028.1 578.1 L1031.2 575.2 L1033.2 570.4 L1034.0 566.1 L1035.9 561.8 L1037.1 561.0 L1038.3 560.8 L1039.2 559.0 L1040.3 560.4 L1041.4 562.2 L1043.0 564.9 L1044.6 568.1 L1046.2 572.0 L1047.7 575.9 L1049.3 577.5 L1052.5 578.3 L1054.8 579.5 L1059.5 579.5" fill="none" stroke="#1f77b4" stroke-width="1" stroke-linejoin="round"/><path d="M1123.2 579.8 L1135.3 578.7 L1148.5 577.1 L1156.2 574.9 L1161.7 573.8 L1166.1 574.1 L1170.5 573.4 L1176.0 574.1 L1180.4 575.2 L1187.0 576.7 L1193.6 577.4 L1203.6 578.5 L1214.6 579.3 L1224.5 579.8 L1245.9 579.8 L1245.9 579.7 L1123.2 579.7Z" fill="#9467bd" fill-opacity="0.3" stroke="none"/><path d="M1123.2 579.8 L1135.3 578.7 L1148.5 577.1 L1156.2 574.9 L1161.7 573.8 L1166.1 574.1 L1170.5 573.4 L1176.0 574.1 L1180.4 575.2 L1187.0 576.7 L1193.6 577.4 L1203.6 578.5 L1214.6 579.3 L1224.5 579.8 L1245.9 579.8" fill="none" stroke="#9467bd" stroke-width="1" stroke-linejoin="round"/><path d="M792.0 579.7 L804.5 578.7 L809.1 577.4 L812.5 575.1 L815.9 571.2 L818.7 567.8 L820.5 566.0 L822.8 567.8 L825.0 565.5 L827.8 568.3 L829.6 570.5 L832.3 572.8 L834.2 574.6 L838.7 578.5 L845.1 579.7 L845.1 579.7 L792.0 579.7Z" fill="#d62728" fill-opacity="0.3" stroke="none"/><path d="M792.0 579.7 L804.5 578.7 L809.1 577.4 L812.5 575.1 L815.9 571.2 L818.7 567.8 L820.5 566.0 L822.8 567.8 L825.0 565.5 L827.8 568.3 L829.6 570.5 L832.3 572.8 L834.2 574.6 L838.7 578.5 L845.1 579.7" fill="none" stroke="#d62728" stroke-width="1" stroke-linejoin="round"/><rect x="786.8" y="580.2" width="1" height="2.5" fill="#8a94a6"/><text x="787.3" y="590.7" font-family="Liberation Sans" font-size="8.2" fill="#5d6b80" text-anchor="middle">0</text><rect x="1030.1" y="580.2" width="1" height="2.5" fill="#8a94a6"/><text x="1030.6" y="590.7" font-family="Liberation Sans" font-size="8.2" fill="#5d6b80" text-anchor="middle">500</text><rect x="1095.8" y="580.2" width="1" height="2.5" fill="#8a94a6"/><text x="1096.3" y="590.7" font-family="Liberation Sans" font-size="8.2" fill="#5d6b80" text-anchor="middle">1000</text><rect x="1135.3" y="580.2" width="1" height="2.5" fill="#8a94a6"/><text x="1135.8" y="590.7" font-family="Liberation Sans" font-size="8.2" fill="#5d6b80" text-anchor="middle">1500</text><rect x="1163.0" y="580.2" width="1" height="2.5" fill="#8a94a6"/><text x="1163.5" y="590.7" font-family="Liberation Sans" font-size="8.2" fill="#5d6b80" text-anchor="middle">2000</text><rect x="1185.4" y="580.2" width="1" height="2.5" fill="#8a94a6"/><text x="1185.9" y="590.7" font-family="Liberation Sans" font-size="8.2" fill="#5d6b80" text-anchor="middle">2500</text><rect x="1219.4" y="580.2" width="1" height="2.5" fill="#8a94a6"/><text x="1219.9" y="590.7" font-family="Liberation Sans" font-size="8.2" fill="#5d6b80" text-anchor="middle">3500</text><rect x="1204.1" y="580.2" width="1" height="2.5" fill="#8a94a6"/><rect x="1232.5" y="580.2" width="1" height="2.5" fill="#8a94a6"/><rect x="1245.0" y="580.2" width="1" height="2.5" fill="#8a94a6"/></svg>
<div class="a" style="left:0;top:0"><div class="a" style="left:729px;top:603px;width:463.8px;height:20.5px;background:#f8fafc"></div><div class="a" style="left:728.5px;top:603px;width:1px;height:141.0px;background:#e8ecf2"></div><div class="a" style="left:819.1px;top:603px;width:1px;height:141.0px;background:#e8ecf2"></div><div class="a" style="left:862.0px;top:603px;width:1px;height:141.0px;background:#e8ecf2"></div><div class="a" style="left:902.0px;top:603px;width:1px;height:141.0px;background:#e8ecf2"></div><div class="a" style="left:943.5px;top:603px;width:1px;height:141.0px;background:#e8ecf2"></div><div class="a" style="left:983.6px;top:603px;width:1px;height:141.0px;background:#e8ecf2"></div><div class="a" style="left:1025.1px;top:603px;width:1px;height:141.0px;background:#e8ecf2"></div><div class="a" style="left:1064.8px;top:603px;width:1px;height:141.0px;background:#e8ecf2"></div><div class="a" style="left:1107.8px;top:603px;width:1px;height:141.0px;background:#e8ecf2"></div><div class="a" style="left:1149.3px;top:603px;width:1px;height:141.0px;background:#e8ecf2"></div><div class="a" style="left:1192.3px;top:603px;width:1px;height:141.0px;background:#e8ecf2"></div><div class="a" style="left:728.5px;top:602.5px;width:464.8px;height:1px;background:#e8ecf2"></div><div class="a" style="left:728.5px;top:623.0px;width:464.8px;height:1px;background:#e8ecf2"></div><div class="a" style="left:728.5px;top:647.8px;width:464.8px;height:1px;background:#e8ecf2"></div><div class="a" style="left:728.5px;top:671.7px;width:464.8px;height:1px;background:#e8ecf2"></div><div class="a" style="left:728.5px;top:695.4px;width:464.8px;height:1px;background:#e8ecf2"></div><div class="a" style="left:728.5px;top:719.1px;width:464.8px;height:1px;background:#e8ecf2"></div><div class="a" style="left:728.5px;top:743.0px;width:464.8px;height:1px;background:#e8ecf2"></div><div class="a" style="left:729.0px;width:90.6px;top:608.2px;font-size:10px;line-height:12px;text-align:center;color:#3f4856">Name</div><div class="a" style="left:819.6px;width:42.9px;top:608.2px;font-size:10px;line-height:12px;text-align:center;color:#3f4856">Mean</div><div class="a" style="left:862.5px;width:40.0px;top:608.2px;font-size:10px;line-height:12px;text-align:center;color:#3f4856">Stdev</div><div class="a" style="left:902.5px;width:41.5px;top:608.2px;font-size:10px;line-height:12px;text-align:center;color:#3f4856">5%</div><div class="a" style="left:944.0px;width:40.1px;top:608.2px;font-size:10px;line-height:12px;text-align:center;color:#3f4856">10%</div><div class="a" style="left:984.1px;width:41.5px;top:608.2px;font-size:10px;line-height:12px;text-align:center;color:#3f4856">25%</div><div class="a" style="left:1025.6px;width:39.7px;top:608.2px;font-size:10px;line-height:12px;text-align:center;color:#3f4856">50%</div><div class="a" style="left:1065.3px;width:43.0px;top:608.2px;font-size:10px;line-height:12px;text-align:center;color:#3f4856">75%</div><div class="a" style="left:1108.3px;width:41.5px;top:608.2px;font-size:10px;line-height:12px;text-align:center;color:#3f4856">90%</div><div class="a" style="left:1149.8px;width:43.0px;top:608.2px;font-size:10px;line-height:12px;text-align:center;color:#3f4856">95%</div><div class="a" style="left:736.2px;top:630.8px;font-size:12.4px;line-height:14px;color:#334155;">Ticket</div><div class="a" style="left:826.8px;top:630.8px;font-size:12.4px;line-height:14px;color:#334155;">550</div><div class="a" style="left:869.7px;top:630.8px;font-size:12.4px;line-height:14px;color:#334155;">30</div><div class="a" style="left:909.7px;top:630.8px;font-size:12.4px;line-height:14px;color:#334155;">510</div><div class="a" style="left:951.2px;top:630.8px;font-size:12.4px;line-height:14px;color:#334155;">520</div><div class="a" style="left:991.3px;top:630.8px;font-size:12.4px;line-height:14px;color:#334155;">530</div><div class="a" style="left:1032.8px;top:630.8px;font-size:12.4px;line-height:14px;color:#334155;">550</div><div class="a" style="left:1072.5px;top:630.8px;font-size:12.4px;line-height:14px;color:#334155;">570</div><div class="a" style="left:1115.5px;top:630.8px;font-size:12.4px;line-height:14px;color:#334155;">590</div><div class="a" style="left:1157.0px;top:630.8px;font-size:12.4px;line-height:14px;color:#334155;">600</div><div class="a" style="left:736.2px;top:654.9px;font-size:12.4px;line-height:14px;color:#334155;">Time</div><div class="a" style="left:826.8px;top:654.9px;font-size:12.4px;line-height:14px;color:#334155;">700</div><div class="a" style="left:869.7px;top:654.9px;font-size:12.4px;line-height:14px;color:#334155;">110</div><div class="a" style="left:909.7px;top:654.9px;font-size:12.4px;line-height:14px;color:#334155;">530</div><div class="a" style="left:951.2px;top:654.9px;font-size:12.4px;line-height:14px;color:#334155;">560</div><div class="a" style="left:991.3px;top:654.9px;font-size:12.4px;line-height:14px;color:#334155;">630</div><div class="a" style="left:1032.8px;top:654.9px;font-size:12.4px;line-height:14px;color:#334155;">690</div><div class="a" style="left:1072.5px;top:654.9px;font-size:12.4px;line-height:14px;color:#334155;">760</div><div class="a" style="left:1115.5px;top:654.9px;font-size:12.4px;line-height:14px;color:#334155;">840</div><div class="a" style="left:1157.0px;top:654.9px;font-size:12.4px;line-height:14px;color:#334155;">900</div><div class="a" style="left:736.2px;top:679.1px;font-size:12.4px;line-height:14px;color:#334155;">Jet Lag</div><div class="a" style="left:826.8px;top:679.1px;font-size:12.4px;line-height:14px;color:#334155;">930</div><div class="a" style="left:869.7px;top:679.1px;font-size:12.4px;line-height:14px;color:#334155;">360</div><div class="a" style="left:909.7px;top:679.1px;font-size:12.4px;line-height:14px;color:#334155;">470</div><div class="a" style="left:951.2px;top:679.1px;font-size:12.4px;line-height:14px;color:#334155;">530</div><div class="a" style="left:991.3px;top:679.1px;font-size:12.4px;line-height:14px;color:#334155;">690</div><div class="a" style="left:1032.8px;top:679.1px;font-size:12.4px;line-height:14px;color:#334155;">870</div><div class="a" style="left:1072.5px;top:679.1px;font-size:12.4px;line-height:14px;color:#334155;">1100</div><div class="a" style="left:1115.5px;top:679.1px;font-size:12.4px;line-height:14px;color:#334155;">1400</div><div class="a" style="left:1157.0px;top:679.1px;font-size:12.4px;line-height:14px;color:#334155;">1600</div><div class="a" style="left:736.2px;top:702.8px;font-size:12.4px;line-height:14px;color:#334155;letter-spacing:-0.35px;">Environmental</div><div class="a" style="left:826.8px;top:702.8px;font-size:12.4px;line-height:14px;color:#334155;">20</div><div class="a" style="left:869.7px;top:702.8px;font-size:12.4px;line-height:14px;color:#334155;">5</div><div class="a" style="left:909.7px;top:702.8px;font-size:12.4px;line-height:14px;color:#334155;">12</div><div class="a" style="left:951.2px;top:702.8px;font-size:12.4px;line-height:14px;color:#334155;">14</div><div class="a" style="left:991.3px;top:702.8px;font-size:12.4px;line-height:14px;color:#334155;">17</div><div class="a" style="left:1032.8px;top:702.8px;font-size:12.4px;line-height:14px;color:#334155;">20</div><div class="a" style="left:1072.5px;top:702.8px;font-size:12.4px;line-height:14px;color:#334155;">23</div><div class="a" style="left:1115.5px;top:702.8px;font-size:12.4px;line-height:14px;color:#334155;">27</div><div class="a" style="left:1157.0px;top:702.8px;font-size:12.4px;line-height:14px;color:#334155;">28</div><div class="a" style="left:736.2px;top:726.3px;font-size:12.4px;line-height:14px;color:#334155;">Total</div><div class="a" style="left:826.8px;top:726.3px;font-size:12.4px;line-height:14px;color:#334155;">2200</div><div class="a" style="left:869.7px;top:726.3px;font-size:12.4px;line-height:14px;color:#334155;">410</div><div class="a" style="left:909.7px;top:726.3px;font-size:12.4px;line-height:14px;color:#334155;">1600</div><div class="a" style="left:951.2px;top:726.3px;font-size:12.4px;line-height:14px;color:#334155;">1700</div><div class="a" style="left:991.3px;top:726.3px;font-size:12.4px;line-height:14px;color:#334155;">1900</div><div class="a" style="left:1032.8px;top:726.3px;font-size:12.4px;line-height:14px;color:#334155;">2100</div><div class="a" style="left:1072.5px;top:726.3px;font-size:12.4px;line-height:14px;color:#334155;">2400</div><div class="a" style="left:1115.5px;top:726.3px;font-size:12.4px;line-height:14px;color:#334155;">2700</div><div class="a" style="left:1157.0px;top:726.3px;font-size:12.4px;line-height:14px;color:#334155;">2900</div></div>
<svg class="a" style="left:644.8px;top:754px" width="8" height="9"><path d="M0.5 0.5L7.5 4.5L0.5 8.5Z" fill="#c6c2bd"/></svg>
<div class="a" style="left:660px;top:752.9px;font-family:'Liberation Mono',monospace;font-weight:bold;font-size:11.6px;line-height:13px;color:#332f2b;transform:scaleY(1.14);transform-origin:0 10px">Result</div>
</div></body></html>
